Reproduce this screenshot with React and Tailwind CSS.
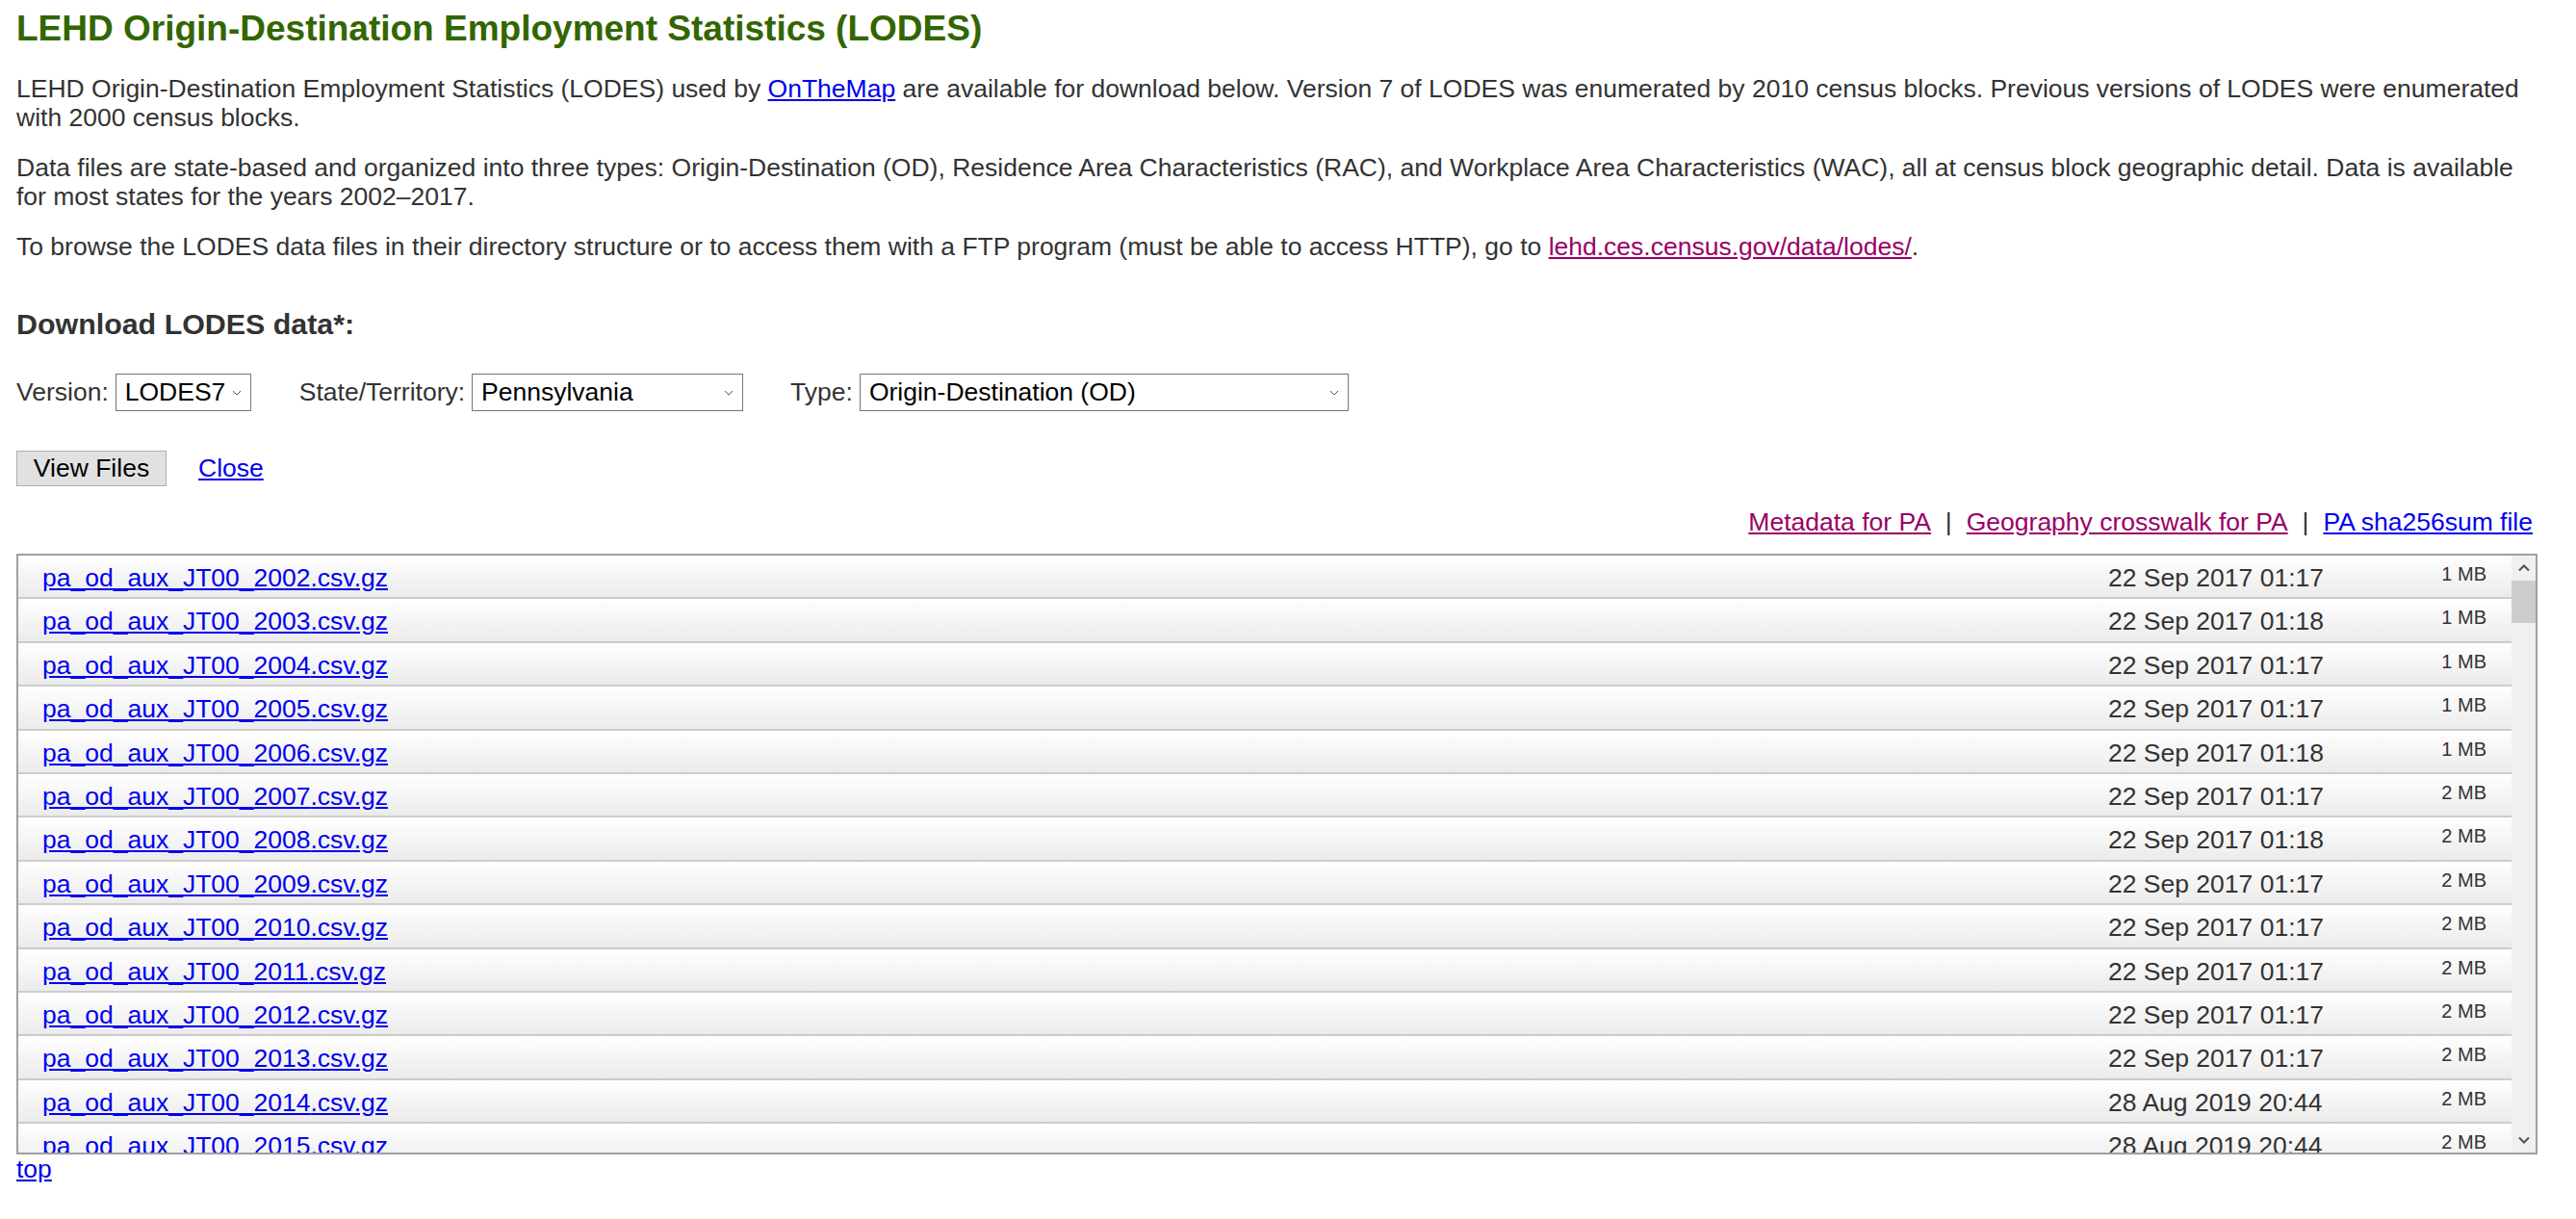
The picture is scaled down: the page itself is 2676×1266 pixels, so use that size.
const files = [
  ["2002", "22 Sep 2017 01:17", "1 MB"],
  ["2003", "22 Sep 2017 01:18", "1 MB"],
  ["2004", "22 Sep 2017 01:17", "1 MB"],
  ["2005", "22 Sep 2017 01:17", "1 MB"],
  ["2006", "22 Sep 2017 01:18", "1 MB"],
  ["2007", "22 Sep 2017 01:17", "2 MB"],
  ["2008", "22 Sep 2017 01:18", "2 MB"],
  ["2009", "22 Sep 2017 01:17", "2 MB"],
  ["2010", "22 Sep 2017 01:17", "2 MB"],
  ["2011", "22 Sep 2017 01:17", "2 MB"],
  ["2012", "22 Sep 2017 01:17", "2 MB"],
  ["2013", "22 Sep 2017 01:17", "2 MB"],
  ["2014", "28 Aug 2019 20:44", "2 MB"],
  ["2015", "28 Aug 2019 20:44", "2 MB"],
  ["2016", "28 Aug 2019 20:44", "2 MB"],
  ["2017", "28 Aug 2019 20:44", "2 MB"],
];

const Chevron = () => (
  <svg width="10" height="6" viewBox="0 0 10 6" className="shrink-0">
    <polyline points="1,1 5,5 9,1" fill="none" stroke="#555" strokeWidth="1" />
  </svg>
);

const FakeSelect = ({ value, width }) => (
  <div
    className={`ml-[7px] flex h-[39px] items-center justify-between border-[1.5px] border-[#767676] bg-white pl-[9px] pr-[9px] text-black ${width}`}
  >
    <span>{value}</span>
    <Chevron />
  </div>
);

const ScrollArrow = ({ down }) => (
  <svg width="12" height="8" viewBox="0 0 12 8">
    <polyline
      points={down ? "1,1.5 6,6.5 11,1.5" : "1,6.5 6,1.5 11,6.5"}
      fill="none"
      stroke="#505050"
      strokeWidth="2"
    />
  </svg>
);

export default function App() {
  return (
    <div className="min-h-screen bg-white pl-[17px] pr-[40px] pt-[9px] font-['Liberation_Sans',Arial,sans-serif] text-[26.5px] text-[#333333]">
      <h1 className="text-[37px] font-bold leading-[1.15] text-[#336600]">
        LEHD Origin-Destination Employment Statistics (LODES)
      </h1>

      <p className="mt-[25px] leading-[30.5px]">
        LEHD Origin-Destination Employment Statistics (LODES) used by{" "}
        <a href="#" className="text-[#0000ee] underline">
          OnTheMap
        </a>{" "}
        are available for download below. Version 7 of LODES was enumerated by
        2010 census blocks. Previous versions of LODES were enumerated with 2000
        census blocks.
      </p>
      <p className="mt-[21px] leading-[30.5px]">
        Data files are state-based and organized into three types:
        Origin-Destination (OD), Residence Area Characteristics (RAC), and
        Workplace Area Characteristics (WAC), all at census block geographic
        detail. Data is available for most states for the years 2002–2017.
      </p>
      <p className="mt-[21px] leading-[30.5px]">
        To browse the LODES data files in their directory structure or to access
        them with a FTP program (must be able to access HTTP), go to{" "}
        <a href="#" className="text-[#990066] underline">
          lehd.ces.census.gov/data/lodes/
        </a>
        .
      </p>

      <h3 className="mt-[48px] text-[30.4px] font-bold leading-[1.15]">
        Download LODES data*:
      </h3>

      <div className="mt-[34px] flex items-center">
        <span>Version:</span>
        <FakeSelect value="LODES7" width="w-[141px]" />
        <span className="ml-[50px]">State/Territory:</span>
        <FakeSelect value="Pennsylvania" width="w-[282px]" />
        <span className="ml-[49px]">Type:</span>
        <FakeSelect value="Origin-Destination (OD)" width="w-[508px]" />
      </div>

      <div className="mt-[39px] flex items-center">
        <button className="h-[37px] w-[156px] border-[1.5px] border-[#adadad] bg-[#e1e1e1] text-black leading-none">
          View Files
        </button>
        <a href="#" className="ml-[33px] text-[#0000ee] underline">
          Close
        </a>
      </div>

      <div className="mt-[20px] pr-[5px] text-right leading-[30.5px]">
        <a href="#" className="text-[#990066] underline">
          Metadata for PA
        </a>
        <span className="mx-[15px]">|</span>
        <a href="#" className="text-[#990066] underline">
          Geography crosswalk for PA
        </a>
        <span className="mx-[15px]">|</span>
        <a href="#" className="text-[#0000ee] underline">
          PA sha256sum file
        </a>
      </div>

      <div className="mt-[18px] flex h-[624px] border-2 border-[#a0a0a0]">
        <div className="flex-1 overflow-hidden">
          {files.map(([year, date, size]) => (
            <div
              key={year}
              className="flex h-[45.4px] items-start border-b-2 border-[#cccccc] bg-linear-to-b from-white to-[#ebebeb] pt-[8px] leading-[30px]"
            >
              <div className="flex-1 pl-[25px]">
                <a href="#" className="text-[#0000ee] underline">
                  pa_od_aux_JT00_{year}.csv.gz
                </a>
              </div>
              <div className="w-[299px]">{date}</div>
              <div className="w-[120px] pr-[26px] text-right text-[20px] leading-[22px]">
                {size}
              </div>
            </div>
          ))}
        </div>
        <div className="flex w-[25px] flex-col bg-[#f0f0f0]">
          <div className="flex h-[26px] items-center justify-center">
            <ScrollArrow />
          </div>
          <div className="h-[44px] bg-[#cdcdcd]" />
          <div className="flex-1" />
          <div className="flex h-[26px] items-center justify-center">
            <ScrollArrow down />
          </div>
        </div>
      </div>

      <a href="#" className="block w-fit leading-[30px] text-[#0000ee] underline">
        top
      </a>
    </div>
  );
}
